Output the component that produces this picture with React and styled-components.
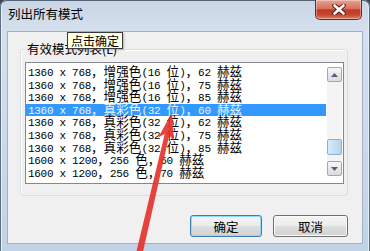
import React from "react";
import styled, { createGlobalStyle } from "styled-components";

const GlobalStyle = createGlobalStyle`
  html, body {
    margin: 0;
    padding: 0;
    background: #3d4857;
  }
  body {
    width: 370px;
    height: 251px;
    overflow: hidden;
  }
`;

const modes = [
  "1360 x 768，增强色(16 位)，62 赫兹",
  "1360 x 768，增强色(16 位)，75 赫兹",
  "1360 x 768，增强色(16 位)，85 赫兹",
  "1360 x 768，真彩色(32 位)，60 赫兹",
  "1360 x 768，真彩色(32 位)，62 赫兹",
  "1360 x 768，真彩色(32 位)，75 赫兹",
  "1360 x 768，真彩色(32 位)，85 赫兹",
  "1600 x 1200，256 色，60 赫兹",
  "1600 x 1200，256 色，70 赫兹",
];
const selectedIndex = 3;

// ascii runs in a half-width mono, cjk runs full width, like SimSun
function ModeText({ text }) {
  const runs = text.match(/[\x00-\x7f]+|[^\x00-\x7f]+/g);
  return runs.map((r, i) =>
    /^[\x00-\x7f]/.test(r) ? <Half key={i}>{r}</Half> : <Full key={i}>{r}</Full>
  );
}

function CloseGlyph() {
  return (
    <svg width="14" height="11" viewBox="0 0 14 11">
      <path d="M2.5 1.5 L11.5 9.5 M11.5 1.5 L2.5 9.5" stroke="#5c1d16" strokeWidth="4.6" strokeLinecap="round" />
      <path d="M2.5 1.5 L11.5 9.5 M11.5 1.5 L2.5 9.5" stroke="#ffffff" strokeWidth="2.6" strokeLinecap="round" />
    </svg>
  );
}

function Arrow({ up }) {
  return (
    <svg width="7" height="4" viewBox="0 0 7 4">
      <path d={up ? "M0 4 L3.5 0 L7 4 Z" : "M0 0 L3.5 4 L7 0 Z"} fill="#4d6185" />
    </svg>
  );
}

export default function App() {
  return (
    <>
      <GlobalStyle />
      <Window>
        <TitleBar>
          <Title>列出所有模式</Title>
          <CloseButton>
            <CloseGlyph />
          </CloseButton>
        </TitleBar>
        <Client>
          <GroupBox>
            <Legend>有效模式列表(L)</Legend>
            <ListBox>
              <Rows>
                {modes.map((m, i) => (
                  <Row key={i} $selected={i === selectedIndex}>
                    <ModeText text={m} />
                  </Row>
                ))}
              </Rows>
              <ScrollBar>
                <ScrollButton>
                  <Arrow up />
                </ScrollButton>
                <Track>
                  <Thumb />
                </Track>
                <ScrollButton>
                  <Arrow />
                </ScrollButton>
              </ScrollBar>
            </ListBox>
          </GroupBox>
          <ButtonRow>
            <Button $width={72} $default>确定</Button>
            <Button $width={75}>取消</Button>
          </ButtonRow>
        </Client>
        <Tooltip>点击确定</Tooltip>
        <Pointer width="370" height="251" viewBox="0 0 370 251">
          <polygon
            points="172,113 173.7,141.1 169.3,134.9 141.9,256.7 135.5,255.3 164.7,133.9 158.1,137.5"
            fill="#e4342e"
            fillOpacity="0.92"
          />
        </Pointer>
      </Window>
    </>
  );
}

const Window = styled.div`
  position: relative;
  width: 370px;
  height: 251px;
  display: flex;
  flex-direction: column;
  border-radius: 7px 7px 0 0;
  overflow: hidden;
  background: linear-gradient(180deg, #c9d5e2 0px, #d4e0ed 30px, #c2d3e6 100%);
  box-shadow: inset 1px 0 0 #5f6f83, inset -1px 0 0 #5f6f83, inset 0 1px 0 #55657a,
    inset 2px 0 0 #e6eef7, inset -2px 0 0 #e6eef7;
  font-family: "Noto Sans CJK SC", "Noto Sans", sans-serif;
  font-size: 12.5px;
`;

const TitleBar = styled.div`
  height: 31px;
  flex-shrink: 0;
  display: flex;
  align-items: flex-start;
  padding-left: 8px;
`;

const Title = styled.div`
  font-size: 12.5px;
  line-height: 28px;
  color: #000;
`;

const CloseButton = styled.div`
  margin-left: auto;
  margin-right: 8px;
  width: 47px;
  height: 20px;
  box-sizing: border-box;
  display: flex;
  align-items: center;
  justify-content: center;
  border: 1px solid #6e2a22;
  border-top: none;
  border-radius: 0 0 5px 5px;
  background: linear-gradient(180deg, #eaa392 0%, #d8705e 45%, #c0392a 52%, #c6452f 78%, #df8466 100%);
  box-shadow: inset 0 0 0 1px rgba(255, 255, 255, 0.35);
`;

const Client = styled.div`
  flex: 1;
  margin: 0 7px 7px 7px;
  display: flex;
  flex-direction: column;
  background: #f0f0f0;
  border: 1px solid #9fb2c7;
`;

const GroupBox = styled.div`
  margin: 17px 0 0 12px;
  width: 328px;
  height: 147px;
  box-sizing: border-box;
  display: flex;
  flex-direction: column;
  border: 1px solid #d5dfe5;
  border-radius: 3px;
  box-shadow: inset 1px 1px 0 #ffffff;
`;

const Legend = styled.div`
  align-self: flex-start;
  margin: -8px 0 0 4px;
  padding: 0 2px;
  background: #f0f0f0;
  font-size: 12.5px;
  line-height: 14px;
  color: #000;
`;

const ListBox = styled.div`
  margin: 6px 0 0 4px;
  width: 319px;
  height: 122px;
  box-sizing: border-box;
  display: flex;
  background: #fff;
  border: 1px solid #828790;
`;

const Rows = styled.div`
  flex: 1;
  padding-top: 3px;
  display: flex;
  flex-direction: column;
`;

const Row = styled.div`
  height: 12.6px;
  line-height: 12.6px;
  font-size: 11px;
  font-family: "Liberation Mono", monospace;
  padding-left: 2px;
  white-space: nowrap;
  color: ${(p) => (p.$selected ? "#e4f4ff" : "#000")};
  background: ${(p) => (p.$selected ? "#3399ff" : "transparent")};
`;

const Half = styled.span`
  font-family: "Liberation Mono", monospace;
  font-size: 11px;
  letter-spacing: -0.3px;
  vertical-align: baseline;
`;

const Full = styled.span`
  font-family: "Noto Sans CJK SC", sans-serif;
  font-size: 12.6px;
  line-height: 10px;
  vertical-align: baseline;
`;

const ScrollBar = styled.div`
  width: 17px;
  box-sizing: border-box;
  padding: 4px 0 7px;
  display: flex;
  flex-direction: column;
  align-items: center;
`;

const ScrollButton = styled.div`
  width: 15px;
  height: 15px;
  box-sizing: border-box;
  display: flex;
  align-items: center;
  justify-content: center;
  border: 1px solid #a7a7a7;
  border-radius: 2px;
  background: linear-gradient(180deg, #f8f8f8 0%, #e8e8e8 50%, #dcdcdc 100%);
`;

const Track = styled.div`
  flex: 1;
  width: 15px;
  display: flex;
  flex-direction: column;
  background: #f4f4f4;
`;

const Thumb = styled.div`
  margin-top: 57px;
  height: 16px;
  box-sizing: border-box;
  border: 1px solid #8cb0cf;
  border-radius: 2px;
  background: linear-gradient(90deg, #d9ecfa 0%, #c3e0f5 50%, #b5d6ef 100%);
`;

const ButtonRow = styled.div`
  display: flex;
  justify-content: flex-end;
  gap: 11px;
  margin-top: 19px;
  padding-right: 14px;
`;

const Button = styled.div`
  width: ${(p) => p.$width}px;
  height: 22px;
  box-sizing: border-box;
  display: flex;
  align-items: center;
  justify-content: center;
  font-size: 12.5px;
  color: #000;
  border: 1px solid ${(p) => (p.$default ? "#3c7fb1" : "#707070")};
  border-radius: 3px;
  background: linear-gradient(180deg, #f4f4f4 0%, #ececec 50%, #dedede 51%, #d2d2d2 100%);
  box-shadow: inset 0 0 0 1px ${(p) => (p.$default ? "#8fdcf8" : "#fbfbfb")};
`;

const Tooltip = styled.div`
  position: absolute;
  left: 67px;
  top: 32px;
  height: 17px;
  box-sizing: border-box;
  padding: 0 3px;
  border: 1px solid #3a3a3a;
  background: #ffffe1;
  font-size: 12px;
  line-height: 15px;
  color: #000;
  box-shadow: 1px 1px 2px rgba(0, 0, 0, 0.25);
`;

const Pointer = styled.svg`
  position: absolute;
  left: 0;
  top: 0;
  pointer-events: none;
`;
